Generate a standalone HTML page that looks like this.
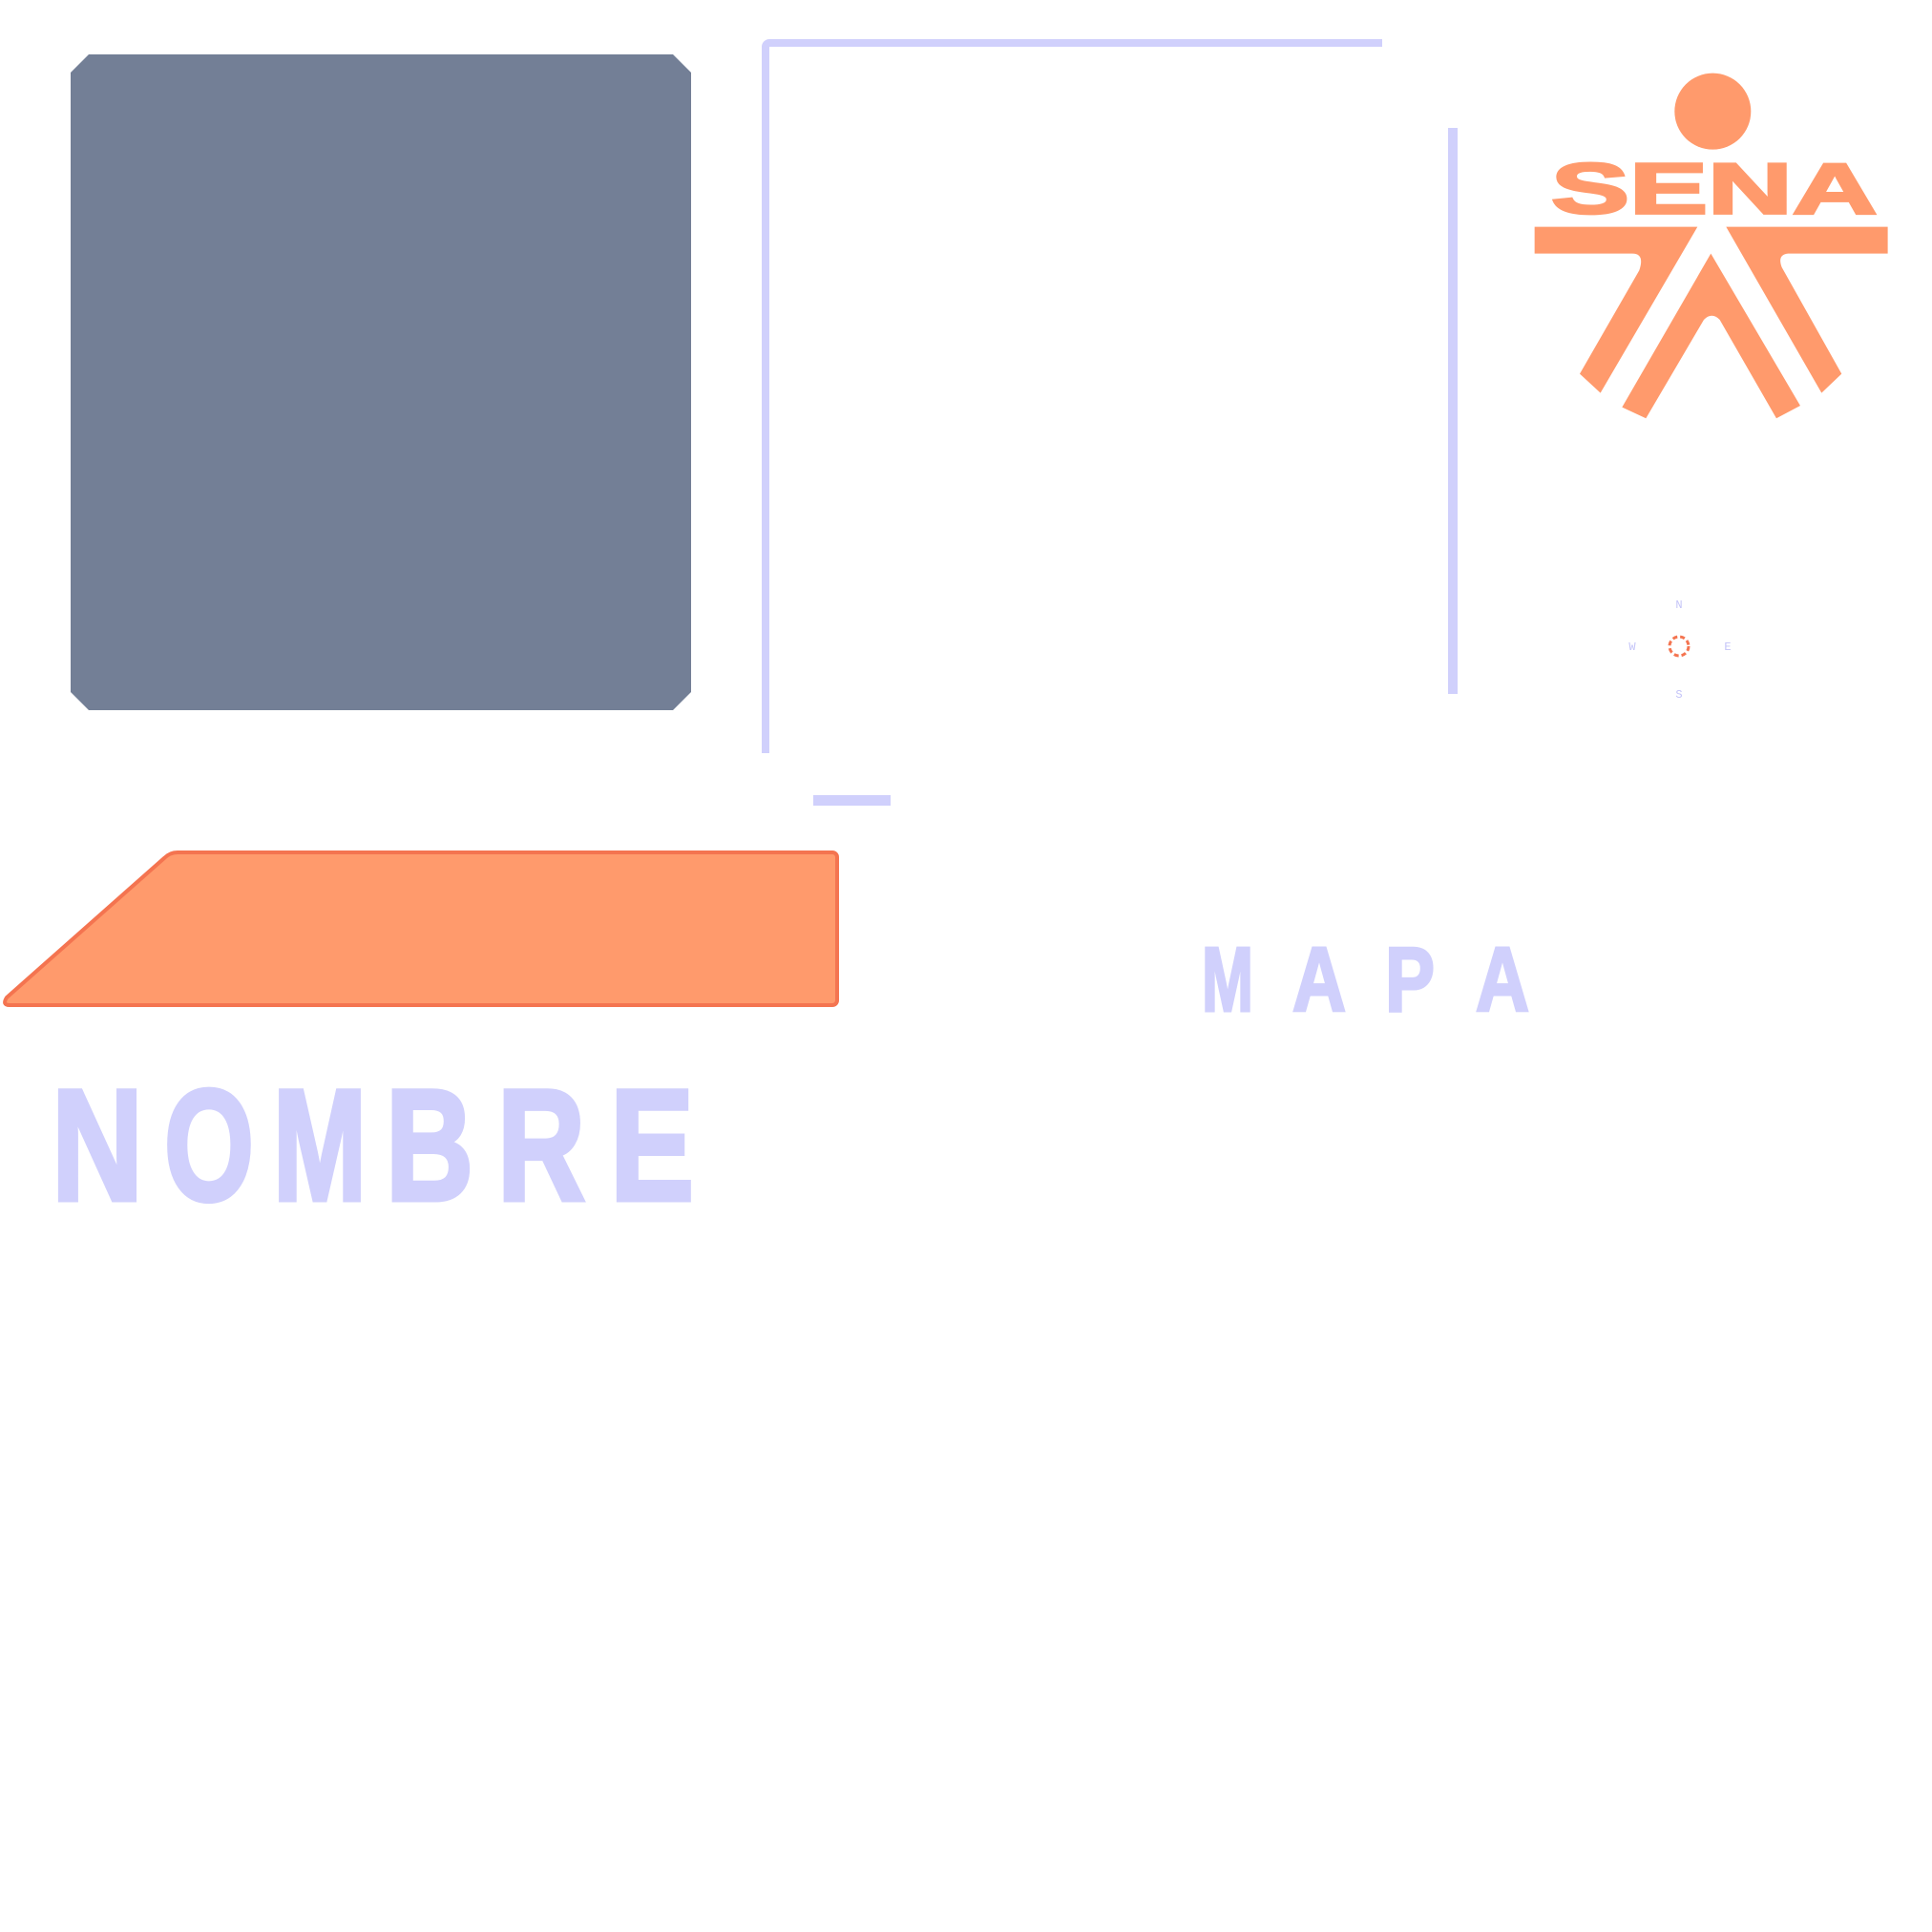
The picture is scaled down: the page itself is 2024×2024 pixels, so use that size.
<!DOCTYPE html>
<html><head><meta charset="utf-8"><style>
html,body{margin:0;padding:0;background:#fff;width:2024px;height:2024px;overflow:hidden}
svg{position:absolute;left:0;top:0}
</style></head><body>
<svg width="2024" height="2024" viewBox="0 0 2024 2024">
<polygon points="93,57 705,57 724,76 724,725 705,744 93,744 74,725 74,76" fill="#737f96"/>
<path d="M802,789 V49 a4,4 0 0 1 4,-4 H1448" fill="none" stroke="#d0d0fc" stroke-width="8"/>
<rect x="1517" y="134" width="10" height="593" fill="#d0d0fc"/>
<rect x="852" y="833" width="81" height="11" fill="#d0d0fc"/>
<path d="M186,893 H872 a5,5 0 0 1 5,5 V1048 a5,5 0 0 1 -5,5 H10 q-8,0 -3,-8 L172,899 q6,-6 14,-6 Z" fill="#ff9a6c" stroke="#f47450" stroke-width="4"/>
<g fill="#d0d0fc" stroke="#d0d0fc" stroke-width="5" font-family="'Liberation Sans',sans-serif" font-weight="bold" font-size="166">
<text x="54" y="1257" textLength="96" lengthAdjust="spacingAndGlyphs">N</text>
<text x="172" y="1257" textLength="94" lengthAdjust="spacingAndGlyphs">O</text>
<text x="286" y="1257" textLength="98" lengthAdjust="spacingAndGlyphs">M</text>
<text x="404" y="1257" textLength="92" lengthAdjust="spacingAndGlyphs">B</text>
<text x="521" y="1257" textLength="92" lengthAdjust="spacingAndGlyphs">R</text>
<text x="639" y="1257" textLength="88" lengthAdjust="spacingAndGlyphs">E</text>
</g>
<g fill="#d0d0fc" stroke="#d0d0fc" stroke-width="3" font-family="'Liberation Sans',sans-serif" font-weight="bold" font-size="96">
<text x="1259" y="1059" textLength="54" lengthAdjust="spacingAndGlyphs">M</text>
<text x="1354" y="1059" textLength="56" lengthAdjust="spacingAndGlyphs">A</text>
<text x="1451" y="1059" textLength="52" lengthAdjust="spacingAndGlyphs">P</text>
<text x="1546" y="1059" textLength="56" lengthAdjust="spacingAndGlyphs">A</text>
</g>
<g transform="translate(1580,60) scale(0.3333)" fill="#ff9a6c">
<circle cx="643" cy="170" r="120"/>
<text x="135" y="490" font-family="'Liberation Sans',sans-serif" font-weight="bold" font-size="225" textLength="1025" lengthAdjust="spacingAndGlyphs" stroke="#ff9a6c" stroke-width="8">SENA</text>
<path d="M83,533 H595 L290,1055 L225,995 L412,670 Q430,617 390,617 H83 Z"/>
<path d="M685,533 H1193 V617 H880 Q845,620 860,660 L1048,995 L985,1055 Z"/>
<path d="M637,617 L918,1095 L843,1135 L665,825 Q640,800 615,825 L433,1135 L358,1100 Z"/>
</g>
<g font-family="'Liberation Mono',monospace" font-size="12" fill="#c4c4f8" text-anchor="middle">
<text x="1759" y="637">N</text><text x="1759" y="731">S</text>
<text x="1710" y="681">W</text><text x="1810" y="681">E</text>
</g>
<circle cx="1759" cy="677" r="10" fill="none" stroke="#f47450" stroke-width="3" stroke-dasharray="5 3"/>
</svg>
</body></html>
